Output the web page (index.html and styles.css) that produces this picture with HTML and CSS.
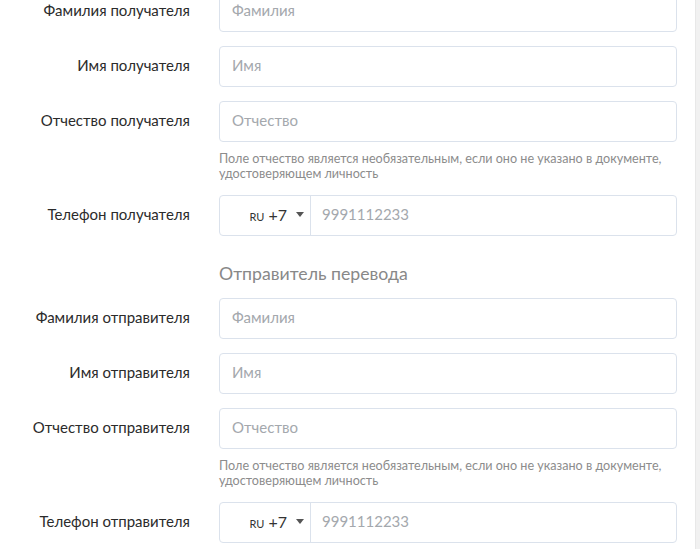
FILE: index.html
```html
<!DOCTYPE html>
<html lang="ru">
<head>
<meta charset="utf-8">
<link rel="stylesheet" href="styles.css">
</head>
<body>
<div class="page">
  <form class="form">
    <div class="row">
      <label class="label">Фамилия получателя</label>
      <div class="field"><div class="input"><span class="ph">Фамилия</span></div></div>
    </div>
    <div class="row">
      <label class="label">Имя получателя</label>
      <div class="field"><div class="input"><span class="ph">Имя</span></div></div>
    </div>
    <div class="row row-hint">
      <label class="label">Отчество получателя</label>
      <div class="field"><div class="input"><span class="ph">Отчество</span></div></div>
      <p class="hint">Поле отчество является необязательным, если оно не указано в документе, удостоверяющем личность</p>
    </div>
    <div class="row">
      <label class="label">Телефон получателя</label>
      <div class="field">
        <div class="input phone">
          <div class="country"><span class="cc">RU</span><span class="code">+7</span><span class="caret"></span></div>
          <span class="ph num">9991112233</span>
        </div>
      </div>
    </div>

    <h3 class="section">Отправитель перевода</h3>

    <div class="row">
      <label class="label">Фамилия отправителя</label>
      <div class="field"><div class="input"><span class="ph">Фамилия</span></div></div>
    </div>
    <div class="row">
      <label class="label">Имя отправителя</label>
      <div class="field"><div class="input"><span class="ph">Имя</span></div></div>
    </div>
    <div class="row row-hint">
      <label class="label">Отчество отправителя</label>
      <div class="field"><div class="input"><span class="ph">Отчество</span></div></div>
      <p class="hint">Поле отчество является необязательным, если оно не указано в документе, удостоверяющем личность</p>
    </div>
    <div class="row">
      <label class="label">Телефон отправителя</label>
      <div class="field">
        <div class="input phone">
          <div class="country"><span class="cc">RU</span><span class="code">+7</span><span class="caret"></span></div>
          <span class="ph num">9991112233</span>
        </div>
      </div>
    </div>
  </form>
  <div class="edge"></div>
</div>
</body>
</html>
```

FILE: styles.css
```css
* { box-sizing: border-box; }
html, body { margin: 0; padding: 0; background: #fff; }
body {
  font-family: Lato, "Open Sans", "Liberation Sans", sans-serif;
  color: #333;
  height: 549px;
  overflow: hidden;
}
.page {
  display: flex;
  height: 549px;
}
.form {
  width: 695px;
  margin-top: -9px;
}
.edge {
  width: 5px;
  background: #f1f1f1;
  border-left: 1px solid #e8e8e8;
}
.row {
  display: grid;
  grid-template-columns: 190px 458px;
  column-gap: 29px;
  align-items: center;
  margin-bottom: 14px;
}
.label {
  text-align: right;
  font-size: 15px;
  color: #2b2b2b;
  line-height: 18px;
  padding-bottom: 3px;
}
.field { grid-column: 2; }
.row-hint .label { grid-row: 1; }
.input {
  height: 41px;
  border: 1px solid #dbe2ec;
  border-radius: 4px;
  display: flex;
  align-items: center;
  padding: 0 12px 3px;
  background: #fff;
}
.ph {
  font-size: 15px;
  color: #a4a8ad;
}
.hint {
  grid-column: 2;
  margin: 9px 0 0;
  font-size: 12.6px;
  line-height: 15px;
  color: #8c8c8c;
}
.phone { padding: 0 0 0 0; }
.country {
  width: 91px;
  height: 100%;
  border-right: 1px solid #dbe2ec;
  display: flex;
  align-items: center;
  justify-content: flex-end;
  padding-right: 6px;
  padding-bottom: 2px;
}
.cc {
  font-size: 11px;
  color: #333;
  margin-right: 4px;
  margin-top: 3px;
}
.code {
  font-size: 16px;
  color: #333;
}
.caret {
  width: 0;
  height: 0;
  border-left: 4px solid transparent;
  border-right: 4px solid transparent;
  border-top: 5px solid #555;
  margin-left: 9px;
}
.num { margin-left: 11px; margin-bottom: 3px; }
.section {
  margin: 28px 0 14px 219px;
  font-size: 17.7px;
  font-weight: normal;
  line-height: 20px;
  color: #888;
}
```
